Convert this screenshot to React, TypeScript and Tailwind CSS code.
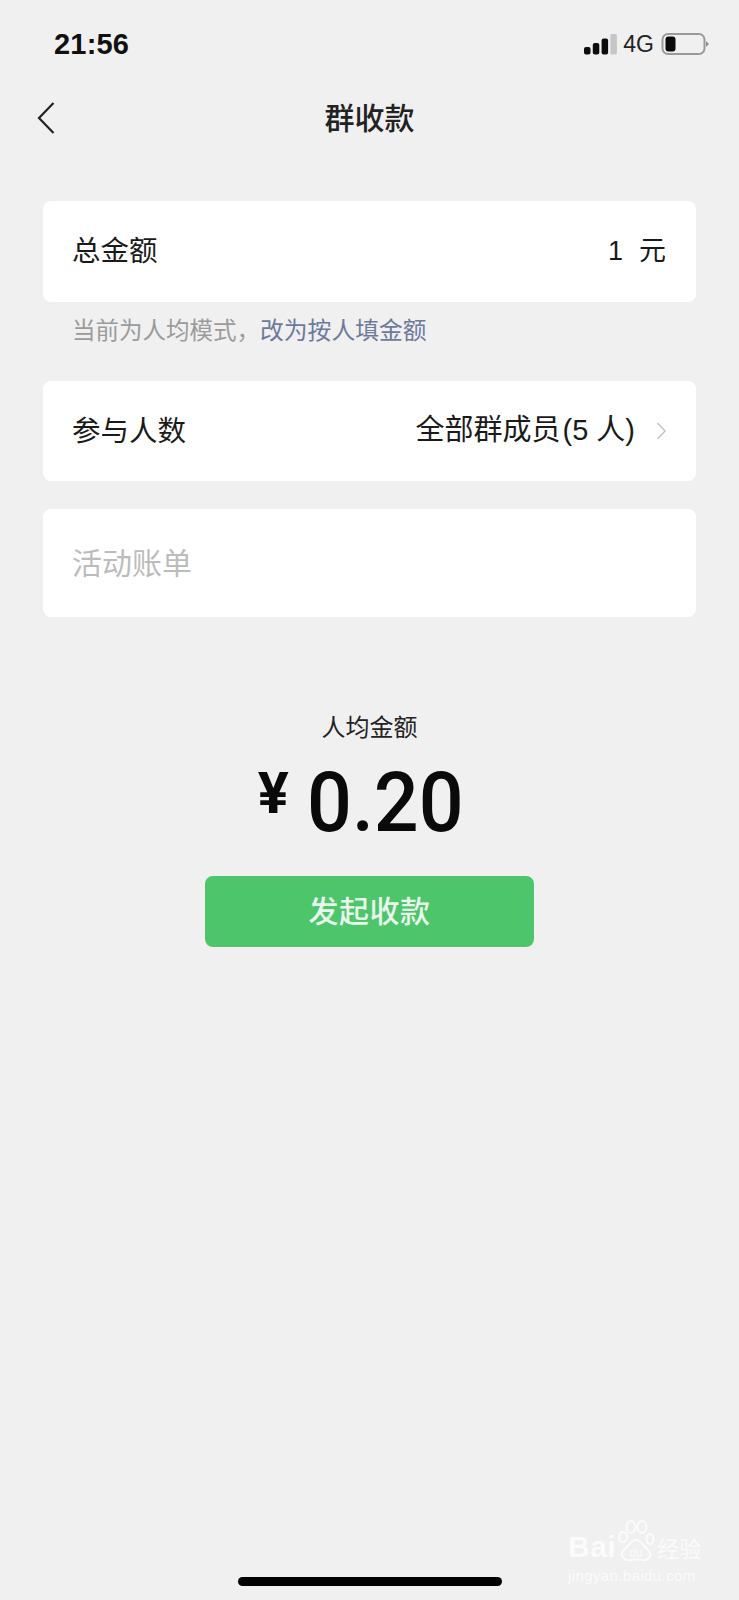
import React from "react";

const cjk = "font-['Liberation_Sans','Noto_Sans_CJK_SC',sans-serif]";

function StatusIcons() {
  return (
    <div className="flex items-center">
      <svg width="33" height="22" viewBox="0 0 33 22" aria-hidden="true">
        <rect x="0" y="14" width="6.5" height="7.5" rx="2" fill="#0c0c0c" />
        <rect x="8.8" y="10" width="6.5" height="11.5" rx="2" fill="#0c0c0c" />
        <rect x="17.6" y="5.5" width="6.5" height="16" rx="2" fill="#0c0c0c" />
        <rect x="26.4" y="1" width="6.5" height="20.5" rx="1.5" fill="#c6c6c6" />
      </svg>
      <span className="ml-[6px] text-[23px] leading-none text-[#222]">4G</span>
      <svg className="ml-[7px]" width="48" height="24" viewBox="0 0 48 24" aria-hidden="true">
        <rect x="1.5" y="2" width="42" height="20" rx="5.5" fill="none" stroke="#9a9a9a" strokeWidth="2" />
        <rect x="4.5" y="4.5" width="10" height="15" rx="3" fill="#0a0a0a" />
        <path d="M45 9 L48 12 L45 15 Z" fill="#8d8d8d" />
      </svg>
    </div>
  );
}

function Watermark() {
  return (
    <div className="absolute left-[568px] top-[1521px] flex flex-col items-start text-white/75 select-none">
      <div className="flex items-end h-[41px] leading-none">
        <span className="text-[30px] font-bold tracking-[0.5px]">Bai</span>
        <svg className="ml-[1px]" width="38" height="42" viewBox="0 0 36 42" aria-hidden="true">
          <g fill="none" stroke="#fff" strokeOpacity="0.75" strokeWidth="2">
            <ellipse cx="5" cy="17" rx="4" ry="5" />
            <ellipse cx="13" cy="7" rx="4.5" ry="6" />
            <ellipse cx="24" cy="7" rx="4.5" ry="6" />
            <ellipse cx="32" cy="19" rx="3.5" ry="5" />
            <path d="M18 20 C12 20 11 26 6 30 C1 35 6 41 13 40 C17 39 20 39 24 40 C31 41 35 35 30 30 C25 26 24 20 18 20 Z" />
          </g>
          <text x="18" y="37" textAnchor="middle" fontSize="12" fill="#fff" fillOpacity="0.75" fontFamily="Liberation Sans, sans-serif">du</text>
        </svg>
        <span className="text-[22px] ml-[2px] mb-[1px]">经验</span>
      </div>
      <span className="mt-[6px] text-[15px] leading-none tracking-[0.4px]">jingyan.baidu.com</span>
    </div>
  );
}

export default function App() {
  return (
    <div className={`relative w-[739px] h-[1600px] overflow-hidden bg-[#f0f0f0] text-[#111] ${cjk}`}>
      <div className="flex items-center justify-between h-[30px] mt-[29px] pl-[54px] pr-[30px]">
        <span className="text-[29px] leading-none font-semibold tracking-[0.2px] text-[#111]">21:56</span>
        <StatusIcons />
      </div>

      <div className="relative flex items-center justify-center h-[44px] mt-[38px]">
        <svg className="absolute left-[36px] top-[4px]" width="20" height="34" viewBox="0 0 20 34" aria-hidden="true">
          <path d="M17.5 2 L3 17 L17.5 32" fill="none" stroke="#222" strokeWidth="2.2" />
        </svg>
        <span className="text-[30px] leading-none font-medium text-[#222]">群收款</span>
      </div>

      <div className="flex flex-col px-[43px] mt-[60px]">
        <div className="flex items-center justify-between h-[101px] rounded-[8px] bg-white pl-[29px] pr-[30px]">
          <span className="text-[28.5px] text-[#1a1a1a]">总金额</span>
          <span className="text-[27px] text-[#1a1a1a]">1<span className="ml-[16px]">元</span></span>
        </div>

        <p className="h-[79px] pt-[15px] pl-[29px] text-[23.5px] leading-[28px] text-[#9b9b9b]">
          当前为人均模式，<span className="text-[23.8px] text-[#6d7a9c]">改为按人填金额</span>
        </p>

        <div className="flex items-center justify-between h-[100px] rounded-[8px] bg-white pl-[29px] pr-[29px]">
          <span className="text-[28.5px] text-[#1a1a1a]">参与人数</span>
          <div className="flex items-center">
            <span className="text-[29px] text-[#1a1a1a]">全部群成员<span className="ml-[2px]">(5 人)</span></span>
            <svg className="ml-[21px]" width="11" height="20" viewBox="0 0 11 20" aria-hidden="true">
              <path d="M1.5 2 L9 10 L1.5 18" fill="none" stroke="#c6c6c6" strokeWidth="1.6" />
            </svg>
          </div>
        </div>

        <div className="flex items-center h-[108px] mt-[28px] rounded-[8px] bg-white pl-[29px]">
          <span className="text-[30px] text-[#bcbcbc]">活动账单</span>
        </div>
      </div>

      <div className="flex flex-col items-center mt-[96px]">
        <span className="text-[24px] leading-[30px] text-[#222]">人均金额</span>
        <div className="flex items-start h-[90px] mt-[15px] font-['Roboto','Noto_Sans',sans-serif]">
          <span className="text-[58px] leading-[60px] font-bold text-[#0a0a0a] mt-[5px] mr-[18px]">¥</span>
          <span className="text-[84px] leading-[90px] font-medium scale-x-[0.94] origin-left text-[#0a0a0a] mr-[8px]">0.20</span>
        </div>
        <button className="flex items-center justify-center w-[329px] h-[71px] mt-[28px] rounded-[8px] bg-[#4dc56a] text-[30px] font-medium tracking-[0.5px] text-[#e8f7ec]">
          发起收款
        </button>
      </div>

      <div className="absolute left-[238px] top-[1577px] w-[264px] h-[9px] rounded-full bg-black" />
      <Watermark />
    </div>
  );
}
